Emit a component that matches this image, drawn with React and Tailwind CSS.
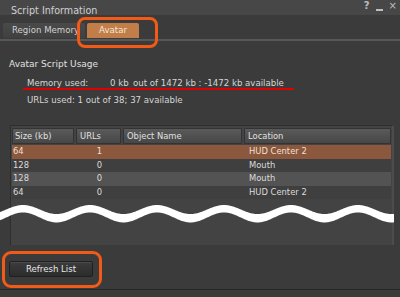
import React from "react";

function wavePath() {
  const pts = [];
  const bot = [];
  const x0 = 0, x1 = 394, top = 200;
  for (let x = x0; x <= x1; x += 1) {
    const c = Math.cos((2 * Math.PI * (x - 23)) / 67);
    pts.push(`${x},${(209.5 - 4.5 * c - top).toFixed(2)}`);
    bot.push(`${x},${(217.5 - 5 * c - top).toFixed(2)}`);
  }
  return "M" + pts.join(" L") + " L" + bot.reverse().join(" L") + " Z";
}

const rows = [
  { size: "64", urls: "1", loc: "HUD Center 2", sel: true },
  { size: "128", urls: "0", loc: "Mouth" },
  { size: "128", urls: "0", loc: "Mouth", alt: true },
  { size: "64", urls: "0", loc: "HUD Center 2" },
];

export default function App() {
  return (
    <div
      className="relative w-[400px] h-[297px] overflow-hidden bg-[#3b3b3b] text-[#d6d6d6] flex flex-col"
      style={{ fontFamily: '"DejaVu Sans", "Liberation Sans", sans-serif' }}
    >
      {/* title bar */}
      <div className="h-[15px] bg-[#474747] flex items-end justify-between pl-[11px] pr-[3px]">
        <span className="text-[9.6px] leading-[12px] text-[#cfcfcf] translate-y-[2px]">Script Information</span>
        <div className="flex items-end gap-[6px] text-[10px] leading-[12px] text-[#bdbdbd] self-start">
          <span className="font-bold">?</span>
          <span className="w-[7px] h-[2px] bg-[#bdbdbd] mb-[1px]" />
          <span>×</span>
        </div>
      </div>

      {/* tabs */}
      <div className="mt-[8px] flex items-end pl-[3px] gap-[2px] h-[15px]">
        <div className="w-[82px] h-[15px] bg-gradient-to-b from-[#4a4a4a] to-[#404040] rounded-t-[2px] flex items-center pl-[9px] text-[8.6px] text-[#d0d0d0] whitespace-nowrap overflow-hidden">
          Region Memory
        </div>
        <div className="w-[52px] h-[15px] bg-[#c27e48] rounded-t-[2px] flex items-center justify-center text-[8.6px] text-[#f2e6da] whitespace-nowrap">
          Avatar
        </div>
      </div>
      <div className="h-[2px] bg-[#575757] mt-[1px]" />

      {/* usage info */}
      <div className="pl-[9px] mt-[17px] text-[8.6px] leading-[12px]">
        <div className="text-[#e0e0e0] text-[9px]">Avatar Script Usage</div>
        <div className="pl-[18px] mt-[7px] flex whitespace-nowrap">
          <span className="w-[83px]">Memory used:</span>
          <span className="w-[19px]">0 kb</span>
          <span className="ml-[4px]">out of 1472 kb : -1472 kb available</span>
        </div>
        <div className="ml-[14px] w-[271px] h-[2px] bg-[#e00000] mt-[-1px]" />
        <div className="pl-[18px] mt-[4px]">URLs used: 1 out of 38; 37 available</div>
      </div>

      {/* table */}
      <div className="ml-[10px] mr-[6px] mt-[19px] h-[120px] bg-[#434343] border-t border-l border-[#2e2e2e] border-r-[2px] border-r-[#4c4c4c] pt-[2px] pl-[1px] pr-[1px] text-[8.4px]">
        <div className="flex h-[16px] gap-[2px]">
          <div className="w-[62px] bg-gradient-to-b from-[#5a5a5a] to-[#474747] border border-[#333] rounded-[1px] flex items-center pl-[2px] text-[#e0e0e0]">
            Size (kb)
          </div>
          <div className="w-[45px] bg-gradient-to-b from-[#5a5a5a] to-[#474747] border border-[#333] rounded-[1px] flex items-center pl-[3px] text-[#e0e0e0]">
            URLs
          </div>
          <div className="w-[119px] bg-gradient-to-b from-[#5a5a5a] to-[#474747] border border-[#333] rounded-[1px] flex items-center pl-[3px] text-[#e0e0e0]">
            Object Name
          </div>
          <div className="flex-1 bg-gradient-to-b from-[#5a5a5a] to-[#474747] border border-[#333] rounded-[1px] flex items-center pl-[3px] text-[#e0e0e0]">
            Location
          </div>
        </div>
        <div className="mt-[1px] flex flex-col">
          {rows.map((r, i) => (
            <div
              key={i}
              className={
                "flex h-[13.5px] items-center " +
                (r.sel ? "bg-[#8b573d] text-[#f0e0d4]" : r.alt ? "bg-[#535353] text-[#dcdcdc]" : "bg-[#3f3f3f] text-[#dcdcdc]")
              }
            >
              <div className="w-[64px] pl-[1px]">{r.size}</div>
              <div className="w-[47px] text-center">{r.urls}</div>
              <div className="w-[121px]" />
              <div className="flex-1 pl-[5px]">{r.loc}</div>
            </div>
          ))}
        </div>
      </div>

      {/* bottom */}
      <div className="pl-[9px] mt-[16px]">
        <button className="w-[84px] h-[16px] rounded-[2px] border border-[#202020] bg-gradient-to-b from-[#3c3c3c] to-[#2c2c2c] text-[8.6px] text-[#e8e8e8] flex items-center justify-center shadow-[inset_0_1px_0_#4a4a4a]">
          Refresh List
        </button>
      </div>
      <div className="mt-auto mb-[7px] h-[1px] bg-[#262626]" />

      {/* wave overlay */}
      <svg className="absolute left-0 top-[200px]" width="396" height="26" viewBox="0 0 396 26">
        <path d={wavePath()} fill="#ffffff" />
      </svg>

      {/* annotation rings */}
      <div className="absolute left-[77px] top-[17px] w-[81px] h-[31px] rounded-[8px] border-[3px] border-[#f25a18]" />
      <div className="absolute left-[2px] top-[251px] w-[100px] h-[37px] rounded-[9px] border-[3px] border-[#f25a18]" />
    </div>
  );
}
